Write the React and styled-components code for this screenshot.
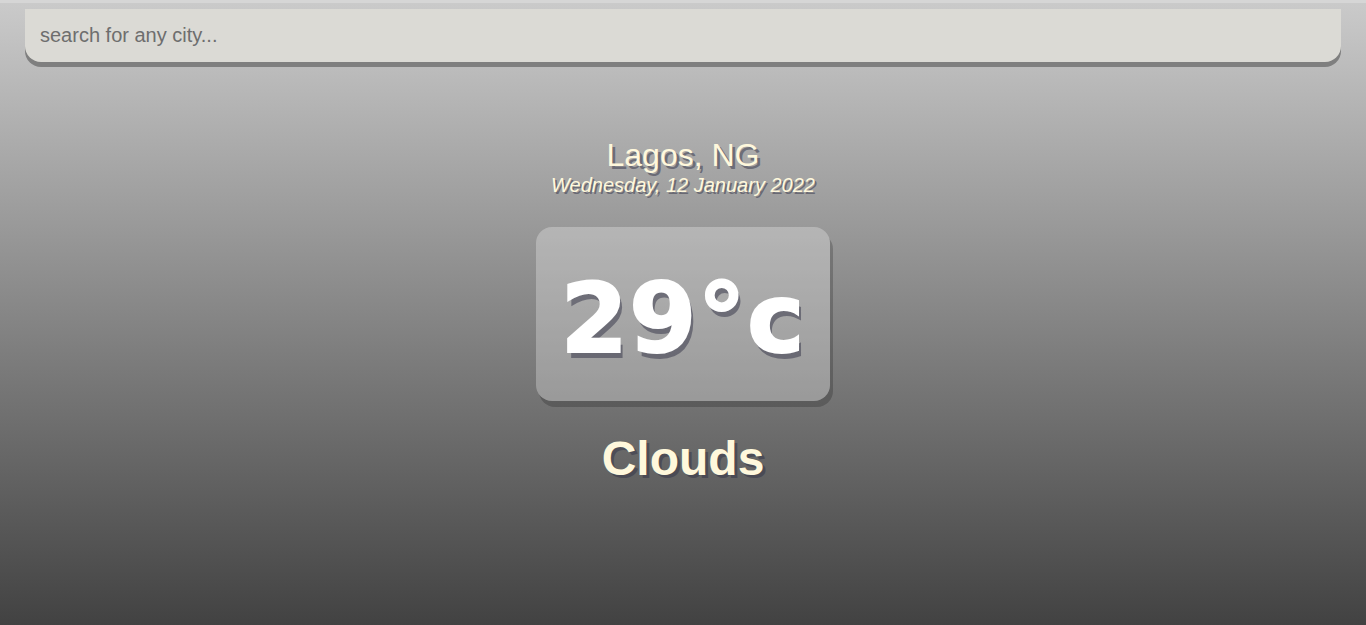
import React from "react";
import styled, { createGlobalStyle } from "styled-components";

const GlobalStyle = createGlobalStyle`
  * {
    box-sizing: border-box;
  }
  body {
    margin: 0;
    background: #d6d6d6;
    font-family: "Liberation Sans", Arial, sans-serif;
  }
`;

const Main = styled.main`
  min-height: 622px;
  margin-top: 3px;
  padding: 6px 25px 25px;
  background-image: linear-gradient(to bottom, #cacaca, #424242);
`;

const SearchBox = styled.div`
  width: 100%;
  margin-bottom: 75px;
`;

const SearchBar = styled.input`
  display: block;
  width: 100%;
  padding: 15px;
  appearance: none;
  border: none;
  outline: none;
  background-color: #dbdad5;
  border-radius: 0 0 16px 16px;
  box-shadow: 0 5px #7f7f7f;
  color: #313131;
  caret-color: #000;
  font-family: "Liberation Sans", Arial, sans-serif;
  font-size: 20px;
  line-height: 23px;

  &::placeholder {
    color: #6e6e6e;
  }
`;

const LocationBox = styled.div`
  text-align: center;
`;

const Location = styled.div`
  color: #fff8dc;
  font-size: 32px;
  font-weight: 400;
  line-height: 37px;
  text-shadow: 3px 3px rgba(50, 50, 70, 0.5);
`;

const DateLine = styled.div`
  color: #fff8dc;
  font-size: 20px;
  font-style: italic;
  line-height: 23px;
  text-shadow: 2px 2px rgba(50, 50, 70, 0.5);
`;

const WeatherBox = styled.div`
  text-align: center;
`;

const Temp = styled.div`
  display: inline-block;
  margin: 30px auto;
  padding: 20px 25px 10px;
  background-color: rgba(255, 255, 255, 0.28);
  border-radius: 16px;
  box-shadow: 3px 6px rgba(0, 0, 0, 0.2);
  color: #fff;
  font-family: "DejaVu Sans", "Liberation Sans", sans-serif;
  font-size: 97px;
  font-weight: 900;
  line-height: 144px;
  letter-spacing: 1px;
  -webkit-text-stroke: 2px #fff;
  text-shadow: 3px 6px rgba(50, 50, 70, 0.5);
`;

const Weather = styled.div`
  color: #fff8dc;
  font-size: 48px;
  font-weight: 700;
  line-height: 55px;
  text-shadow: 3px 3px rgba(50, 50, 70, 0.5);
`;

const App = () => {
  return (
    <>
      <GlobalStyle />
      <Main>
        <SearchBox>
          <SearchBar type="text" placeholder="search for any city..." autoFocus />
        </SearchBox>
        <LocationBox>
          <Location>Lagos, NG</Location>
          <DateLine>Wednesday, 12 January 2022</DateLine>
        </LocationBox>
        <WeatherBox>
          <Temp>29°c</Temp>
          <Weather>Clouds</Weather>
        </WeatherBox>
      </Main>
    </>
  );
};

export default App;
